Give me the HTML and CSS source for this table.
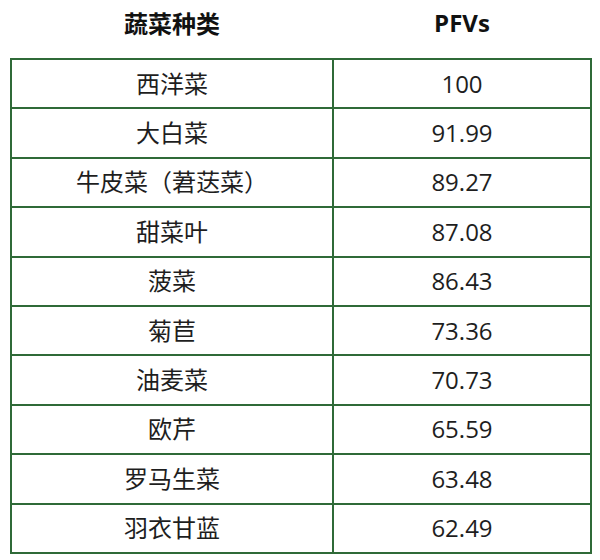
FILE: index.html
```html
<!DOCTYPE html>
<html lang="zh">
<head>
<meta charset="utf-8">
<link rel="stylesheet" href="styles.css">
</head>
<body>
<table class="pfv-table">
  <thead>
    <tr class="head-row"><th class="col-name">蔬菜种类</th><th class="col-val">PFVs</th></tr>
  </thead>
  <tbody>
    <tr><td>西洋菜</td><td>100</td></tr>
    <tr><td>大白菜</td><td>91.99</td></tr>
    <tr><td>牛皮菜（莙荙菜）</td><td>89.27</td></tr>
    <tr><td>甜菜叶</td><td>87.08</td></tr>
    <tr><td>菠菜</td><td>86.43</td></tr>
    <tr><td>菊苣</td><td>73.36</td></tr>
    <tr><td>油麦菜</td><td>70.73</td></tr>
    <tr><td>欧芹</td><td>65.59</td></tr>
    <tr><td>罗马生菜</td><td>63.48</td></tr>
    <tr><td>羽衣甘蓝</td><td>62.49</td></tr>
  </tbody>
</table>
</body>
</html>
```
FILE: styles.css
```css
html, body {
  margin: 0;
  padding: 0;
  background: #ffffff;
}
body {
  font-family: "Open Sans", "Noto Sans CJK SC", sans-serif;
  color: #1e1e1e;
}
.pfv-table {
  border-collapse: collapse;
  margin-left: 10px;
  width: 580px;
  table-layout: fixed;
}
.col-name { width: 322px; }
.col-val { width: 258px; }
.head-row th {
  height: 44px;
  padding: 0 0 14px 0;
  font-size: 24px;
  font-weight: 700;
  text-align: center;
  border: none;
  color: #111;
  box-sizing: content-box;
}
.pfv-table td {
  border: 2px solid #2f6a38;
  height: 47.4px;
  padding: 0;
  text-align: center;
  font-size: 24px;
  line-height: 1;
  vertical-align: middle;
}
```
